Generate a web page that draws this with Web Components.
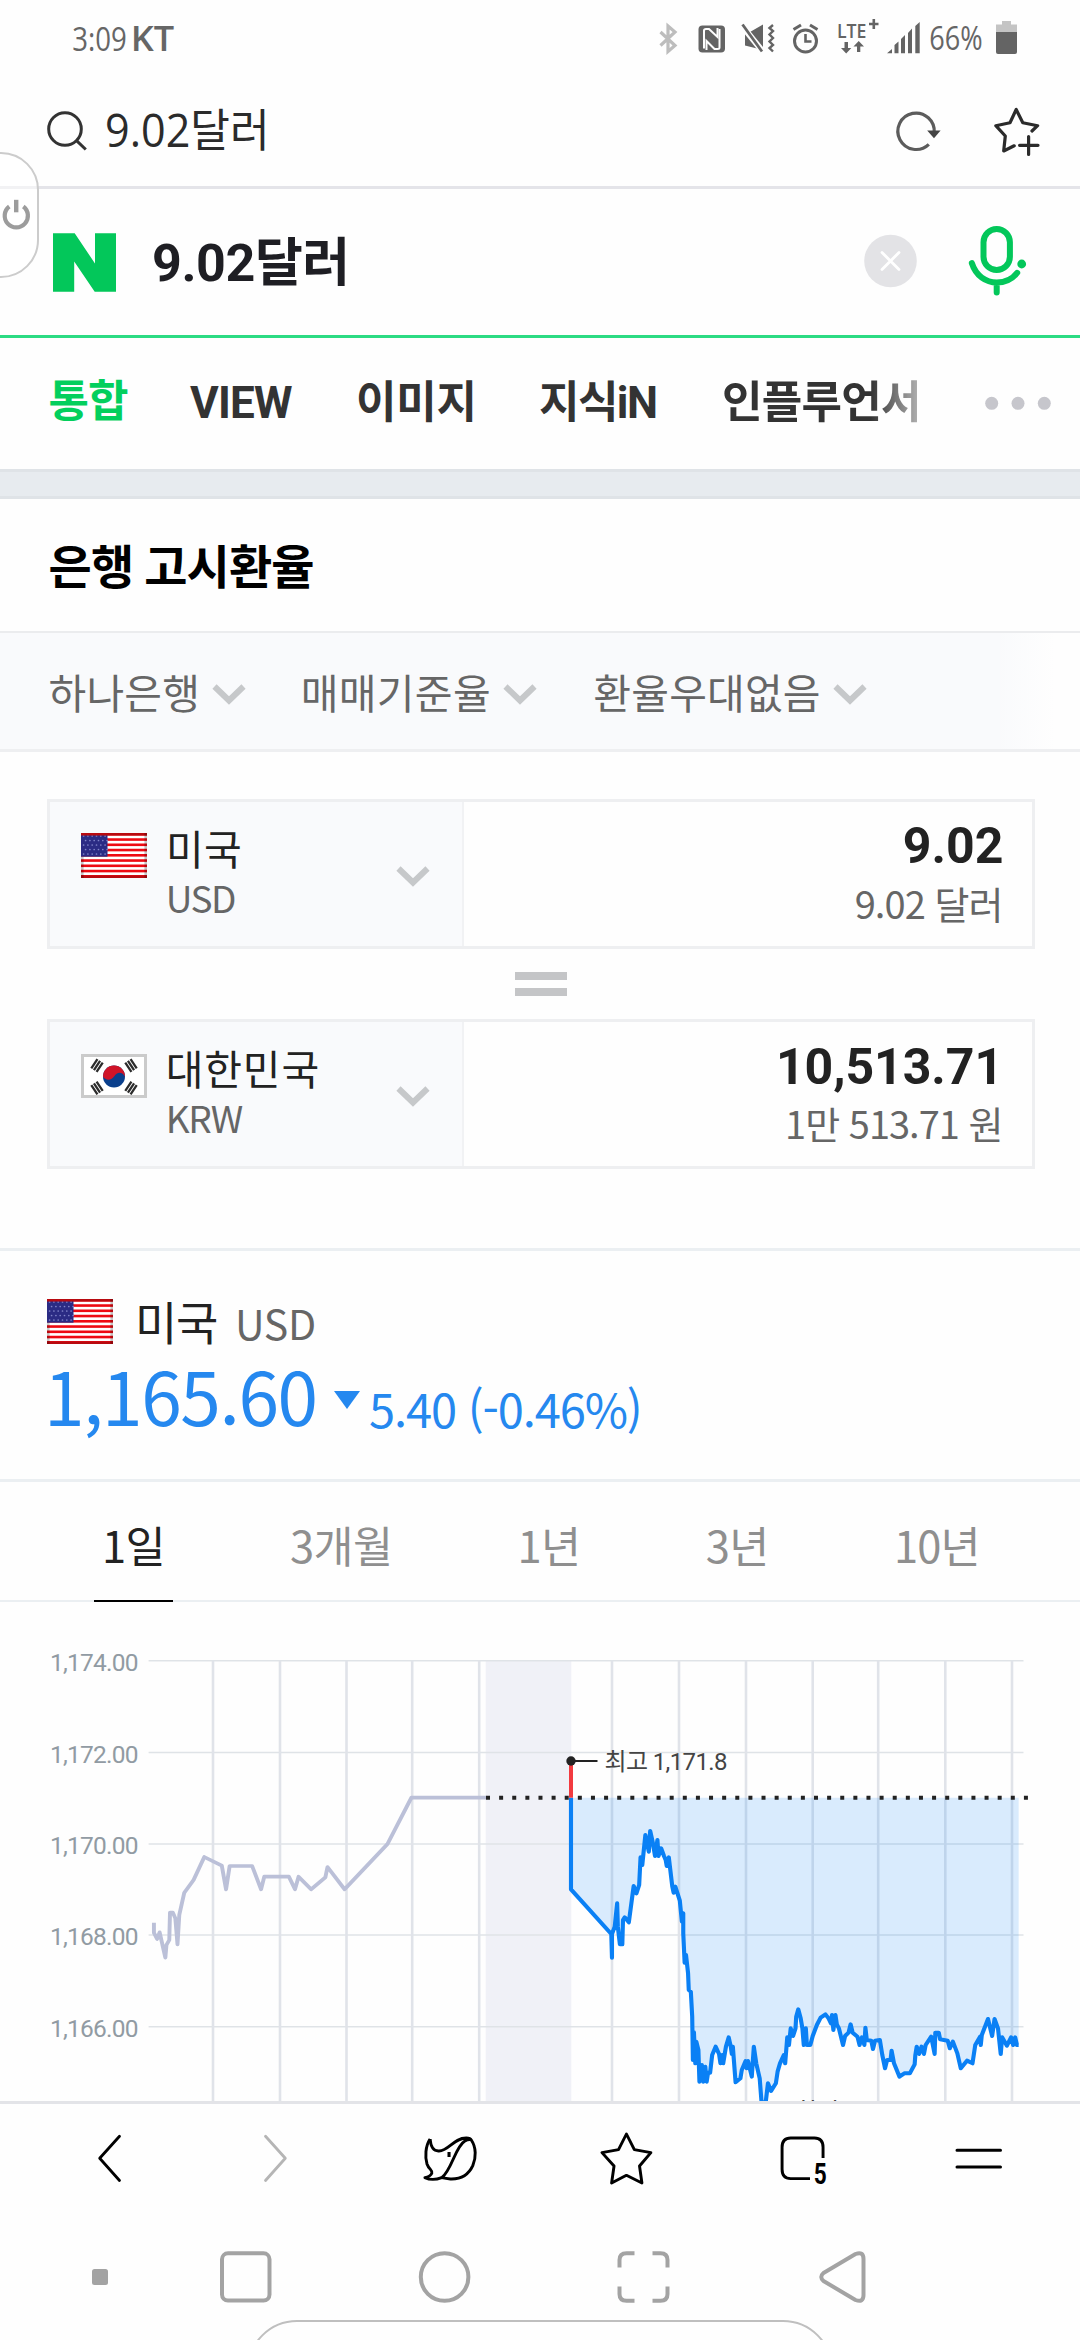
<!DOCTYPE html>
<html lang="ko">
<head>
<meta charset="utf-8">
<title>9.02달러</title>
<style>
body{margin:0;background:#fefefe;font-family:Roboto,"Noto Sans CJK KR",sans-serif}
</style>
</head>
<body>
<mobile-page></mobile-page>
<script>
const RESET = `*{box-sizing:border-box}ink-text,app-icon{flex:none}`;
const CJK = `"Noto Sans CJK KR",sans-serif`;

/* Icon artwork: [x, y, width, height, markup], drawn on the page's own grid. */
const CHEVRON = `<path d="M2.5 3.5L17 17.5L31.5 3.5" fill="none" stroke="#c6c8ca" stroke-width="6"/>`;
const usStripes = Array.from({length:9},(_, i)=>`<rect x="0" y="${(i*5.25).toFixed(2)}" width="66" height="2.6" fill="#ee0a12"/>`).join('');
const usStars = Array.from({length:5},(_, r)=>Array.from({length:6},(_, c)=>`<circle cx="${2.6+c*4.3+(r%2)*2}" cy="${3+r*4.5}" r=".85"/>`).join('')).join('');
const trigram = (x,y,a)=>`<g transform="translate(${x} ${y}) rotate(${a})"><path d="M-5.5 -3.2H5.500M-5.500 0H5.500M-5.500 3.200H5.500" stroke="#2c2c2c" stroke-width="2.300"/></g>`;
const ICONS = {
  bluetooth:[656,22,24,34,`<path d="M660.5 32L675 45.5L668 51.5V26L675 32L660.5 45.5" fill="none" stroke="#bdbdbd" stroke-width="3.2"/>`],
  nfc:[696,22,32,34,`<rect x="698.5" y="25.5" width="26.5" height="27" rx="4" fill="#646464"/><path d="M704 48.500V30.500Q704 29 706 29H709L717.500 37V28" fill="none" stroke="#fefefe" stroke-width="2"/><path d="M719.500 29V47.500Q719.500 49 717.500 49H714.500L706.500 41V50" fill="none" stroke="#fefefe" stroke-width="2"/>`],
  mute:[740,22,36,34,`<path d="M745 32H750L763 24.500V50L745 45.500Z" fill="#646464"/><path d="M741 24.500L764 53" stroke="#fefefe" stroke-width="6"/><path d="M742.500 24.500L762 51.500" stroke="#646464" stroke-width="2.800"/><path d="M773 25L769.500 28L773 31L769.500 34.500L773 38L769.500 41.500L773 45L769.500 48L773 51.500" fill="none" stroke="#646464" stroke-width="2.400"/>`],
  alarm:[790,22,32,34,`<g fill="none" stroke="#646464"><circle cx="805.500" cy="41" r="11" stroke-width="3"/><path d="M805.500 34V41.500H811.500" stroke-width="2.600"/><path d="M793.500 29.500L801 25M817.500 29.500L810 25" stroke-width="3"/></g>`],
  lte:[836,18,44,37,`<text x="837" y="37.500" font-family="Open Sans,sans-serif" font-weight="600" font-size="20.500" textLength="29.500" lengthAdjust="spacingAndGlyphs" fill="#646464">LTE</text><path d="M869 24H878.500M873.800 19V29" stroke="#646464" stroke-width="2.600"/><path d="M844.500 42H848V48H851.300L846.200 53.500L841 48H844.500ZM857 52V46.500H853.500L858.700 41L864 46.500H860.300V52Z" fill="#646464"/>`],
  signal:[886,20,35,35,`<path d="M887 53.300L892 49V53.300ZM894.500 53.300V45L898.500 41.500V53.300ZM901 53.300V39L905 35V53.300ZM908 53.300V33L912 28.500V53.300ZM915.300 53.300V26L919.700 22V53.300Z" fill="#646464"/>`],
  battery:[995,20,24,35,`<path d="M1002 21H1011V24.500H1017V33H996V24.500H1002Z" fill="#c4c4c4"/><path d="M996 32H1017V52A2 2 0 0 1 1015 54H998A2 2 0 0 1 996 52Z" fill="#646464"/>`],
  search:[46,110,42,42,`<g fill="none" stroke="#333" stroke-width="3"><circle cx="65" cy="129" r="16.300"/><path d="M76.800 140.800L85.800 149.500"/></g>`],
  reload:[894,110,50,44,`<path d="M928.800 144.300A18.200 18.200 0 1 1 934.200 133" fill="none" stroke="#5c5c5c" stroke-width="3.200"/><path d="M927.200 130.500H940.600L934 138.200Z" fill="#444"/>`],
  addstar:[992,106,50,52,`<path d="M1032 131L1037.600 125.700L1022.800 122.700L1016.200 109.500L1010 122.700L995.800 125.700L1005.300 136L1003.700 151L1014.200 145.800M1019.600 145.300H1038M1028.600 136.500V154.500" fill="none" stroke="#2b2b2b" stroke-width="3.200" stroke-linecap="round" stroke-linejoin="round"/>`],
  naver:[53,233,63,59,`<path d="M53 233.300H74.700L95 263.500V233.300H116V291.700H94.700L74.200 261.500V291.700H53Z" fill="#03c75a"/>`],
  clear:[864,234,53,54,`<circle cx="890.500" cy="261" r="26.300" fill="#e3e3e6"/><path d="M882 252.500L899 269.500M899 252.500L882 269.500" stroke="#fff" stroke-width="2.800" stroke-linecap="round"/>`],
  mic:[966,224,62,74,`<g fill="none" stroke="#03c75a" stroke-width="6" stroke-linecap="round"><rect x="983.500" y="229" width="26.400" height="41" rx="13.200"/><path d="M971.800 263C976 276 986 282.500 996.700 282.500C1005 282.500 1012.500 279 1017.200 272.800M996.700 283V292.500"/></g><circle cx="1021.700" cy="264" r="4.400" fill="#03c75a"/>`],
  dots:[984,395,68,16,`<g fill="#c6c6cc"><circle cx="991.700" cy="403.300" r="6.500"/><circle cx="1018" cy="403.300" r="6.500"/><circle cx="1044.300" cy="403.300" r="6.500"/></g>`],
  chevron:[0,0,34,22,CHEVRON],
  equals:[515,972,52,24,`<path d="M515 976H567M515 992H567" stroke="#c4c5c7" stroke-width="8"/>`],
  us:[0,0,66,45,`<rect width="66" height="45" fill="#fff"/>${usStripes}<rect width="26.500" height="23.700" fill="#2b2b84"/><g fill="#8083c8">${usStars}</g><path d="M0 1.300H66M0 43.700H66" stroke="#b80a10" stroke-width="2.600"/><path d="M1.300 23.700V45M64.700 0V45" stroke="#000" stroke-opacity=".22" stroke-width="2.600"/>`],
  kr:[0,0,66,44,`<rect x="1.500" y="1.500" width="63" height="41" fill="#fff" stroke="#cbcbcb" stroke-width="3"/><circle cx="33" cy="22.500" r="11" fill="#0a3f8c"/><path d="M22 22.500A11 11 0 0 1 44 22.500C40 16.500 35.500 19 33.500 22C30.500 26.500 25 27 22 22.500Z" fill="#d01428"/>${trigram(16,11.500,-56)}${trigram(50,11.500,56)}${trigram(16,34,56)}${trigram(50,34,-56)}`],
  down:[334,1391,26,18,`<path d="M334 1391H360L347 1409Z" fill="#2588ef"/>`],
  power:[0,198,32,34,`<path d="M9.300 206.500A11.600 11.600 0 1 0 23.300 206.500" fill="none" stroke="#9c9c9c" stroke-width="4.200"/><path d="M16.200 199.800V212.300" stroke="#9c9c9c" stroke-width="4.400"/>`],
  back:[96,2132,28,52,`<path d="M119.500 2136.300L99.700 2158.300L119.500 2180.500" fill="none" stroke="#000" stroke-width="2.800" stroke-linecap="round" stroke-linejoin="round"/>`],
  forward:[262,2132,28,52,`<path d="M265.500 2136.300L285.300 2158.300L265.500 2180.500" fill="none" stroke="#b5b5b5" stroke-width="2.800" stroke-linecap="round" stroke-linejoin="round"/>`],
  whale:[421,2133,58,52,`<g transform="translate(0 2090) scale(.34435 .33333)" fill="none" stroke="#000" stroke-width="8.500" stroke-linejoin="round"><path d="M1249 147C1251 172 1260 184 1275 183C1303 182 1318 144 1354 144Q1366 144 1369 151C1383 172 1383 203 1373 227C1360 256 1335 268 1308 267Q1295 266 1283 263C1313 238 1322 170 1350 153Q1358 148 1368 149"/><path d="M1249 147C1235 168 1234 202 1240 222C1246 240 1257 239 1254 250Q1250 260 1234 263C1250 271 1270 268 1283 263"/><path d="M1304 186V201" stroke-width="9"/></g>`],
  star:[599,2131,56,56,`<g transform="translate(540 2090) scale(.34435 .33333)"><path d="M251 132L274 179L322 188L289 228L296 279L251 256L208 279L215 228L180 188L228 179Z" fill="none" stroke="#000" stroke-width="8.500" stroke-linejoin="round"/></g>`],
  tabs:[778,2134,52,54,`<g transform="translate(540 2090) scale(.34435 .33333)"><path d="M822 204V172Q822 144 797 144H728Q703 144 703 172V238Q703 266 728 266H784" fill="none" stroke="#000" stroke-width="8.500"/></g><text x="813.800" y="2184" font-family="Roboto,sans-serif" font-weight="700" font-size="29.500" textLength="13" lengthAdjust="spacingAndGlyphs">5</text>`],
  menu:[953,2146,52,25,`<path d="M957 2150.300H1000.500M957 2167H1000.500" stroke="#000" stroke-width="3" stroke-linecap="round"/>`],
  navdot:[92,2269,16,16,`<rect x="92" y="2269" width="16" height="16" rx="2.500" fill="#a3a3a3"/>`],
  recents:[219,2250,54,54,`<rect x="222" y="2253.300" width="47.500" height="47.300" rx="6" fill="none" stroke="#a3a3a3" stroke-width="4"/>`],
  home:[417,2250,55,54,`<circle cx="444.600" cy="2277" r="23.800" fill="none" stroke="#a3a3a3" stroke-width="4"/>`],
  capture:[616,2250,55,54,`<path d="M619.500 2267.500V2260Q619.500 2253.300 626.500 2253.300H634.500M652.500 2253.300H660.500Q667.500 2253.300 667.500 2260V2267.500M667.500 2286.500V2294Q667.500 2300.700 660.500 2300.700H652.500M634.500 2300.700H626.500Q619.500 2300.700 619.500 2294V2286.500" fill="none" stroke="#a3a3a3" stroke-width="4"/>`],
  navback:[818,2249,50,56,`<path d="M823.500 2273L855.500 2254Q863.500 2251 863.500 2259V2295Q863.500 2303 855.500 2300L823.500 2281Q819 2277 823.500 2273Z" fill="none" stroke="#a3a3a3" stroke-width="4" stroke-linejoin="round"/>`]
};

function component(name, css, html){
  customElements.define(name, class extends HTMLElement{
    constructor(){
      super();
      const t = document.createElement('template');
      t.innerHTML = `<style>${RESET}${css}</style>${html}`;
      this.attachShadow({mode:'open'}).append(t.content.cloneNode(true));
    }
  });
}

customElements.define('app-icon', class extends HTMLElement{
  connectedCallback(){
    if(this.shadowRoot) return;
    const [x,y,w,h,body] = ICONS[this.getAttribute('name')];
    this.attachShadow({mode:'open'}).innerHTML =
      `<style>:host{display:block;width:${w}px;height:${h}px}svg{display:block;overflow:visible}</style><svg width="${w}" height="${h}" viewBox="${x} ${y} ${w} ${h}">${body}</svg>`;
  }
});

/* A text whose box is the box of its ink: w fixes the width by tracking, or by scaling with "squeeze". */
customElements.define('ink-text', class extends HTMLElement{
  connectedCallback(){
    if(this.shadowRoot) return;
    const cs = getComputedStyle(this), text = this.textContent, w = +this.getAttribute('w');
    const ctx = document.createElement('canvas').getContext('2d');
    ctx.font = `${cs.fontWeight} ${cs.fontSize} ${cs.fontFamily}`;
    const m = ctx.measureText(text), size = parseFloat(cs.fontSize);
    const line = Math.round(size);
    const base = line/2 + (m.fontBoundingBoxAscent-m.fontBoundingBoxDescent)/2;
    const h = m.actualBoundingBoxAscent + m.actualBoundingBoxDescent;
    const squeeze = this.hasAttribute('squeeze');
    this.attachShadow({mode:'open'}).innerHTML =
      `<style>:host{display:block;width:${w}px;height:${h}px;white-space:pre}
      span{display:block;width:max-content;line-height:${line}px;transform-origin:0 0}</style><span><slot></slot></span>`;
    const span = this.shadowRoot.querySelector('span');
    if(!squeeze) span.style.letterSpacing = '.01px';
    const laid = span.getBoundingClientRect().width || m.width;
    const ink = m.actualBoundingBoxLeft + m.actualBoundingBoxRight + laid - m.width;
    const scale = squeeze ? w/ink : 1;
    if(!squeeze) span.style.letterSpacing = `${(w-ink)/(text.length-1)}px`;
    span.style.transform = `translate(${m.actualBoundingBoxLeft*scale}px,${m.actualBoundingBoxAscent-base}px) scaleX(${scale})`;
  }
});

component('status-bar', `:host{display:flex;align-items:flex-start;height:75px;color:#666;font-family:"Open Sans",sans-serif}`,
 `<ink-text w="53" squeeze style="font-size:33px;margin:27px 0 0 73px">3:09</ink-text>
  <ink-text w="40" squeeze style="font-size:34px;font-weight:600;margin:25.500px 0 0 8px">KT</ink-text>
  <app-icon name="bluetooth" style="margin:22px 0 0 482px"></app-icon>
  <app-icon name="nfc" style="margin:22px 0 0 16px"></app-icon>
  <app-icon name="mute" style="margin:22px 0 0 12px"></app-icon>
  <app-icon name="alarm" style="margin:22px 0 0 14px"></app-icon>
  <app-icon name="lte" style="margin:18px 0 0 14px"></app-icon>
  <app-icon name="signal" style="margin:20px 0 0 6px"></app-icon>
  <ink-text w="51.500" squeeze style="font-size:33px;margin:26px 0 0 9px">66%</ink-text>
  <app-icon name="battery" style="margin:20px 0 0 13.500px"></app-icon>`);

component('address-bar', `:host{display:flex;align-items:flex-start;height:114px;border-bottom:3px solid #e4e4e9;color:#2b2b2b;font-family:"Open Sans","Noto Sans CJK KR",sans-serif}.q{display:flex;margin-left:19px}`,
 `<app-icon name="search" style="margin:35px 0 0 46px"></app-icon>
  <div class="q"><ink-text w="157.500" squeeze style="font-size:45px;margin-top:33px">9.02달러</ink-text></div>
  <app-icon name="reload" style="margin:35px 0 0 629.500px"></app-icon>
  <app-icon name="addstar" style="margin:31px 0 0 48px"></app-icon>`);

component('search-box', `:host{display:flex;align-items:flex-start;height:149px;border-bottom:3px solid #2cdb83;color:#1e1e23;font-weight:700}`,
 `<app-icon name="naver" style="margin:44px 0 0 53px"></app-icon>
  <ink-text w="191.400" style="font-size:52px;margin:47px 0 0 38px">9.02달러</ink-text>
  <app-icon name="clear" style="margin:45px 0 0 518.600px"></app-icon>
  <app-icon name="mic" style="margin:35px 0 0 49px"></app-icon>`);

component('search-tabs', `:host{display:flex;align-items:flex-start;height:131px;color:#333;font-weight:700;font-size:44px}.on{color:#03cf5d}.fade{-webkit-mask-image:linear-gradient(90deg,#000 76%,rgba(0,0,0,.4) 100%);mask-image:linear-gradient(90deg,#000 76%,rgba(0,0,0,.4) 100%)}`,
 `<ink-text class="on" w="78.400" style="margin:41px 0 0 49.600px">통합</ink-text>
  <ink-text w="102" style="margin:48px 0 0 62px">VIEW</ink-text>
  <ink-text w="114.500" style="margin:41.500px 0 0 66px">이미지</ink-text>
  <ink-text w="116" style="margin:41.500px 0 0 67.500px">지식iN</ink-text>
  <ink-text class="fade" w="193" style="margin:41.500px 0 0 68px">인플루언서</ink-text>
  <app-icon name="dots" style="margin:57px 0 0 67px"></app-icon>`);

component('section-gap', `:host{display:block;box-sizing:border-box;height:30px;background:#e7ebef;border:solid #dfe3e7;border-width:3px 0}`, ``);

component('section-title', `:host{display:flex;align-items:flex-start;height:134px;border-bottom:2px solid #ebecee;color:#000;font-weight:700;font-size:47px}`,
 `<ink-text w="263.800" style="margin:44.700px 0 0 49.600px">은행 고시환율</ink-text>`);

component('filter-bar', `:host{display:flex;align-items:flex-start;height:119px;border-bottom:3px solid #eeeff1;background:linear-gradient(90deg,rgba(255,255,255,0) 995px,#fefefe 1055px),#f9fafc;color:#666;font:400 41px ${CJK}}ink-text{margin-top:41px}app-icon{margin-top:50px}`,
 `<ink-text w="146.700" style="margin-left:49.600px">하나은행</ink-text><app-icon name="chevron" style="margin-left:15.700px"></app-icon>
  <ink-text w="185.300" style="margin-left:57.700px">매매기준율</ink-text><app-icon name="chevron" style="margin-left:14.400px"></app-icon>
  <ink-text w="224.600" style="margin-left:57px">환율우대없음</ink-text><app-icon name="chevron" style="margin-left:13.600px"></app-icon>`);

component('currency-row', `:host{display:flex;height:150px;border:3px solid #eeeff1;width:988px;flex:none}
  .unit{display:flex;align-items:flex-start;width:414px;background:#f9fafc;border-right:2px solid #f1f2f4;flex:none}
  .flag{margin:31px 0 0 31px}.names{margin:28px 0 0 21.700px}.name{height:56px}
  .chev{margin:63px 32px 0 auto}
  .amount{flex:1;display:flex;flex-direction:column;align-items:flex-end;padding-top:24.700px}
  .big{height:60.300px}.small{padding-right:32.300px}`,
 `<div class="unit"><div class="flag"><slot name="flag"></slot></div><div class="names"><div class="name"><slot name="name"></slot></div><div class="code"><slot name="code"></slot></div></div><app-icon class="chev" name="chevron"></app-icon></div>
  <div class="amount"><div class="big"><slot name="big"></slot></div><div class="small"><slot name="small"></slot></div></div>`);

component('rate-converter', `:host{display:flex;flex-direction:column;align-items:center;gap:23px;height:499px;padding:47px 0 0 2px;border-bottom:3px solid #ebeff2}
  .n{color:#222;font:400 41px ${CJK}}.c{color:#666;font:400 37px ${CJK}}.b{color:#222;font-weight:700;font-size:50px}.s{color:#666;font:400 38px ${CJK}}`,
 `<currency-row><app-icon slot="flag" name="us"></app-icon><ink-text class="n" slot="name" w="70" style="margin-left:1.300px">미국</ink-text><ink-text class="c" slot="code" w="66.300">USD</ink-text>
   <ink-text class="b" slot="big" w="97" style="margin-right:30.200px">9.02</ink-text><ink-text class="s" slot="small" w="144">9.02 달러</ink-text></currency-row>
  <app-icon name="equals"></app-icon>
  <currency-row><app-icon slot="flag" name="kr" style="margin-top:1px"></app-icon><ink-text class="n" slot="name" w="148.800">대한민국</ink-text><ink-text class="c" slot="code" w="74">KRW</ink-text>
   <ink-text class="b" slot="big" w="214.500" style="margin:1px 37.500px 0 0">10,513.71</ink-text><ink-text class="s" slot="small" w="211.700">1만 513.71 원</ink-text></currency-row>`);

component('rate-summary', `:host{display:block;height:231px;border-bottom:3px solid #ebeff2;font:400 47px ${CJK}}.row{display:flex;align-items:flex-start;height:122px}.price{height:106px;color:#2588ef}`,
 `<div class="row"><app-icon name="us" style="margin:48px 0 0 47px"></app-icon>
   <ink-text w="78" style="color:#222;font-size:46px;margin:49.700px 0 0 26px">미국</ink-text>
   <ink-text w="75" style="color:#666;font-size:41px;margin:57.700px 0 0 22px">USD</ink-text></div>
  <div class="row price"><ink-text w="264.700" style="font-size:73px;margin:.3px 0 0 50px">1,165.60</ink-text>
   <app-icon name="down" style="margin:18px 0 0 19.300px"></app-icon>
   <ink-text w="269" style="margin:16px 0 0 10px">5.40 (-0.46%)</ink-text></div>`);

component('period-tabs', `:host{display:flex;align-items:flex-start;height:120px;border-bottom:2px solid #ebeff2;color:#8f8f8f;font:400 43.500px ${CJK}}ink-text{margin-top:44px}
  .on{flex:none;width:79px;height:120px;margin-left:94px;padding-left:11px;border-bottom:2px solid #000;color:#222}`,
 `<div class="on"><ink-text w="56.600">1일</ink-text></div>
  <ink-text w="98" style="margin-left:118px">3개월</ink-text>
  <ink-text w="56.500" style="margin-left:131.500px">1년</ink-text>
  <ink-text w="58.600" style="margin-left:129.700px">3년</ink-text>
  <ink-text w="79.500" style="margin-left:131.700px">10년</ink-text>`);

const rows = [1660.7,1752.4,1844,1935,2026.7];
const cols = [213,280,346.5,412.2,479.2,612,679,746,812.7,878.2,945.3,1012];
const today = "90,778 207,912 209,983 209,912 217,890 224,820 226,890 232,943 239,943 241,870 246,862 258,877 272,768 280,790 288,765 292,682 297,705 306,615 316,665 320,603 327,635 334,678 341,630 344,678 352,655 360,678 365,690 368,708 374,682 384,768 388,788 393,770 406,812 412,875 416,850 416,910 420,998 424,975 430,1030 432,1080 438,1085 442,1160 444,1290 447,1207 451,1300 454,1235 460,1260 463,1355 470,1305 474,1355 480,1310 484,1355 488,1328 494,1328 500,1275 510,1250 520,1272 524,1300 529,1275 532,1300 540,1250 548,1222 554,1250 557,1272 560,1250 568,1357 582,1345 586,1320 597,1293 600,1315 604,1293 615,1340 621,1250 628,1300 638,1345 643,1412 650,1425 656,1412 662,1360 671,1383 685,1360 690,1325 697,1300 708,1275 712,1300 718,1222 723,1245 728,1195 735,1218 742,1195 744,1160 750,1138 757,1165 762,1195 766,1245 772,1195 775,1245 785,1245 792,1218 804,1185 815,1163 829,1153 838,1165 845,1180 848,1155 852,1200 858,1155 862,1183 868,1195 880,1245 886,1218 896,1208 902,1183 908,1208 922,1220 928,1245 935,1222 942,1245 945,1193 949,1230 962,1232 967,1257 973,1232 987,1230 994,1275 1002,1315 1008,1290 1018,1290 1021,1262 1028,1300 1044,1340 1058,1330 1074,1330 1088,1303 1090,1275 1094,1250 1101,1272 1108,1250 1115,1272 1120,1245 1136,1220 1146,1272 1148,1208 1158,1208 1162,1228 1184,1232 1190,1255 1199,1235 1212,1270 1222,1315 1240,1292 1256,1300 1264,1245 1278,1220 1280,1245 1283,1215 1301,1167 1313,1218 1320,1167 1330,1195 1338,1272 1342,1222 1356,1247 1368,1222 1374,1245 1380,1222 1385,1245 1390,1245";
const before = "431,878 431,908 440,927 447,907 463,983 466,945 474,930 476,848 484,848 491,865 497,943 502,855 516,788 542,750 572,681 621,707 633,778 643,708 706,708 731,778 740,740 809,740 826,778 836,740 871,778 911,742 917,711 965,778 1085,642 1152,503 1362,503";
component('rate-chart', `:host{display:block;height:499px;overflow:hidden}svg{display:block}text{font-family:Roboto,"Noto Sans CJK KR",sans-serif}.axis{font-size:24.500px;fill:#919ba3}.note{font-size:24px;fill:#444}`,
 `<svg width="1080" height="499" viewBox="0 1602 1080 499">
  <rect x="485.700" y="1660.700" width="85.600" height="442" fill="#f0f1f7"/>
  <path d="${rows.map(y=>`M148.600 ${y}H1023.500`).join('')}" stroke="#dfe3e7" stroke-width="1.500"/>
  <path d="${cols.map(x=>`M${x} 1660.700V2105`).join('')}" stroke="#e0e3e9" stroke-width="2.600"/>
  ${rows.map((y,i)=>`<text class="axis" x="50" y="${y+10.300}" textLength="88.500">1,${174-i*2}.00</text>`).join('')}
  <g fill="none" stroke-width="4" stroke-linejoin="round">
   <g transform="translate(0 1630) scale(.35714 .33333)"><polyline points="${before}" stroke="#bbc0d8" stroke-width="11"/></g>
   <g transform="translate(540 1630) scale(.34435 .33333)"><polygon points="90,503 ${today} 1390,503" fill="#0a80f5" fill-opacity=".15"/><polyline points="90,503 ${today}" stroke="#0a80f5" stroke-width="12"/></g>
   <path d="M571 1761V1797.700" stroke="#f23a3f"/></g>
  <path d="M486 1797.700H1029" stroke="#222" stroke-width="4" stroke-dasharray="4 9.120"/>
  <path d="M571 1761H597.500" stroke="#222" stroke-width="2"/><circle cx="571" cy="1761" r="4.700" fill="#222"/>
  <text class="note" x="604.500" y="1770" textLength="123">최고 1,171.8</text>
  <text class="note" x="795" y="2119.500">최저</text>
 </svg>`);

component('browser-toolbar', `:host{display:flex;align-items:flex-start;height:129px;border-top:3px solid #e3e4e8}`,
 `<app-icon name="back" style="margin:28px 0 0 96px"></app-icon>
  <app-icon name="forward" style="margin:28px 0 0 138px"></app-icon>
  <app-icon name="whale" style="margin:29px 0 0 131px"></app-icon>
  <app-icon name="star" style="margin:27px 0 0 120px"></app-icon>
  <app-icon name="tabs" style="margin:30px 0 0 123px"></app-icon>
  <app-icon name="menu" style="margin:42px 0 0 123px"></app-icon>`);

component('system-nav', `:host{display:block;position:relative;height:110px;overflow:hidden}.row{display:flex;align-items:flex-start}.pill{position:absolute;left:247px;top:90px;width:586px;height:100px;border:2px solid #bfbfbf;border-radius:50px}`,
 `<div class="row"><app-icon name="navdot" style="margin:39px 0 0 92px"></app-icon>
  <app-icon name="recents" style="margin:20px 0 0 111px"></app-icon>
  <app-icon name="home" style="margin:20px 0 0 144px"></app-icon>
  <app-icon name="capture" style="margin:20px 0 0 144px"></app-icon>
  <app-icon name="navback" style="margin:19px 0 0 147px"></app-icon></div><div class="pill"></div>`);

component('side-handle', `:host{position:absolute;left:-40px;top:152px;width:79px;height:126px;border:2px solid #ccc;border-radius:38px;background:rgba(255,255,255,.5);padding:44px 0 0 38px}`,
 `<app-icon name="power"></app-icon>`);

component('mobile-page', `:host{display:block;position:relative;width:1080px;height:2340px;overflow:hidden;background:#fefefe}
  status-bar,address-bar,search-box,search-tabs,section-title,filter-bar,rate-converter,currency-row,rate-summary,period-tabs,browser-toolbar,side-handle{box-sizing:border-box}`,
 `<status-bar></status-bar><address-bar></address-bar><search-box></search-box><search-tabs></search-tabs>
  <section-gap></section-gap><section-title></section-title><filter-bar></filter-bar>
  <rate-converter></rate-converter><rate-summary></rate-summary><period-tabs></period-tabs><rate-chart></rate-chart>
  <browser-toolbar></browser-toolbar><system-nav></system-nav><side-handle></side-handle>`);
</script>
</body>
</html>
